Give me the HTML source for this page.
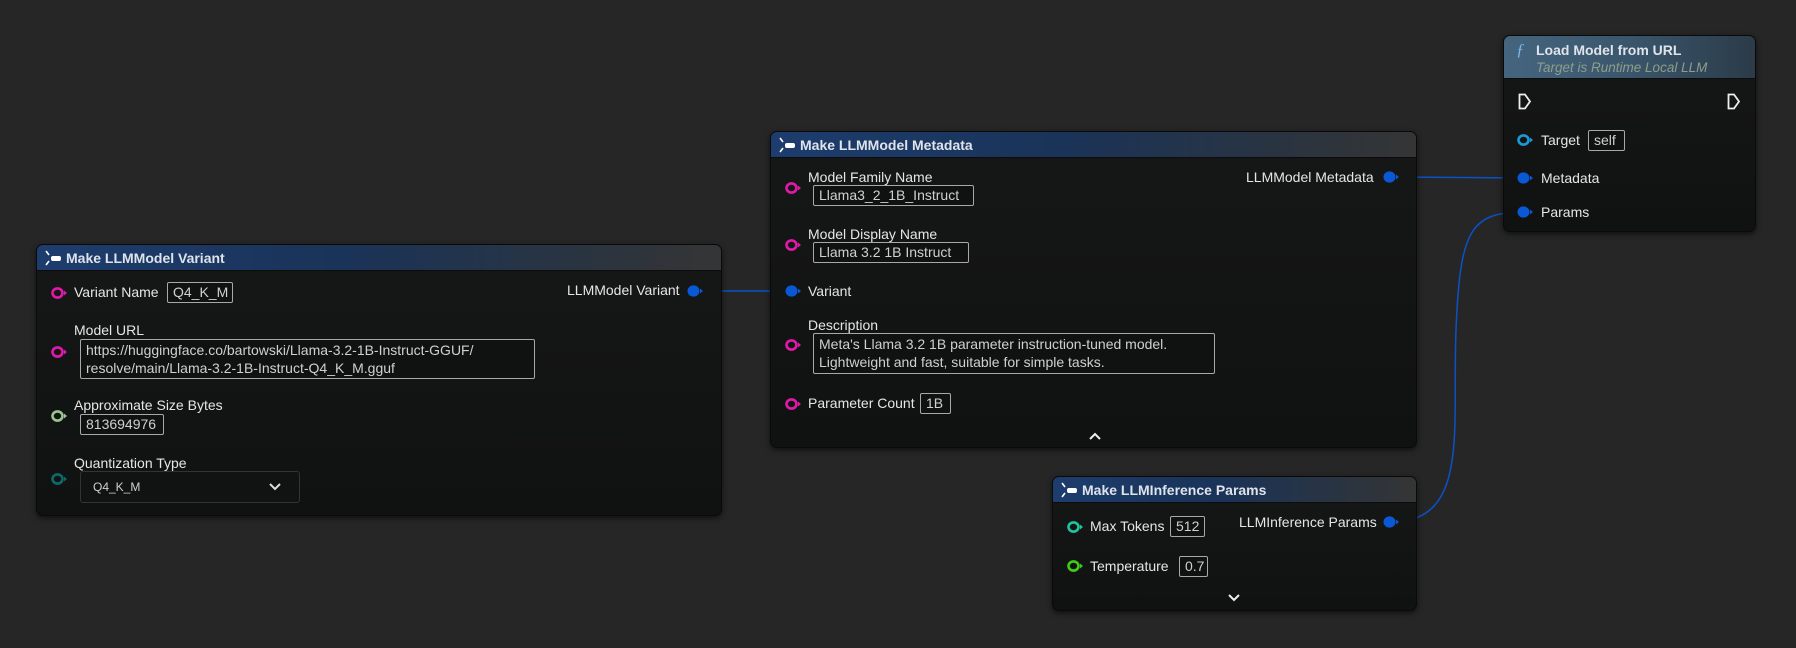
<!DOCTYPE html>
<html><head><meta charset="utf-8"><style>
*{margin:0;padding:0;box-sizing:border-box}
body{width:1796px;height:648px;background:#262626;position:relative;overflow:hidden;font-family:"Liberation Sans",sans-serif;color:#e6e6e6;font-size:14px}
.node{position:absolute;background:linear-gradient(#161717,#101111);border:1px solid #0a0a0a;border-radius:7px;box-shadow:0 2px 6px rgba(0,0,0,.6);overflow:hidden}
.hdr{position:absolute;left:0;right:0;top:0;height:26px;background:linear-gradient(90deg,#1d3d6e 0%,#1a3358 45%,#2a3440 80%,#353535 100%);border-bottom:1px solid #0c0c0c}
.hdr .t{position:absolute;left:29px;top:5px;font-weight:bold;font-size:14px;color:#dfe3ea}
.t{position:absolute;white-space:nowrap}
.box{position:absolute;border:1px solid #a8a8a8;border-radius:2px;color:#d0d0d0;padding:1px 5px;font-size:14px;line-height:17px;white-space:nowrap;background:#101111}
svg.pin{position:absolute;width:18px;height:14px;overflow:visible}
</style></head><body>

<svg width="1796" height="648" style="position:absolute;left:0;top:0">
<path d="M696,291 L790,291" stroke="#0b52c6" stroke-width="1.5" fill="none"/>
<path d="M1391,177 L1525,178" stroke="#0b52c6" stroke-width="1.5" fill="none"/>
<path d="M1391,522 C1470,522 1452,430 1456,330 C1460,230 1470,212 1525,212" stroke="#0b52c6" stroke-width="1.5" fill="none"/>
</svg>

<div class="node" style="left:36px;top:244px;width:686px;height:272px">
 <div class="hdr"><svg style="position:absolute;left:7px;top:5px" width="18" height="16"><path d="M2,1 L5,5 M2,15 L5,11" stroke="#fff" stroke-width="1.6"/><rect x="7" y="6" width="10" height="5" rx="2" fill="#fff"/></svg><div class="t">Make LLMModel Variant</div></div>
</div>
<div class="node" style="left:770px;top:131px;width:647px;height:317px">
 <div class="hdr"><svg style="position:absolute;left:7px;top:5px" width="18" height="16"><path d="M2,1 L5,5 M2,15 L5,11" stroke="#fff" stroke-width="1.6"/><rect x="7" y="6" width="10" height="5" rx="2" fill="#fff"/></svg><div class="t">Make LLMModel Metadata</div></div>
</div>
<div class="node" style="left:1052px;top:476px;width:365px;height:135px">
 <div class="hdr"><svg style="position:absolute;left:7px;top:5px" width="18" height="16"><path d="M2,1 L5,5 M2,15 L5,11" stroke="#fff" stroke-width="1.6"/><rect x="7" y="6" width="10" height="5" rx="2" fill="#fff"/></svg><div class="t">Make LLMInference Params</div></div>
</div>
<div class="node" style="left:1503px;top:35px;width:253px;height:197px">
 <div class="hdr" style="height:43px;background:linear-gradient(90deg,#45657f 0%,#3a566c 50%,#2b3b48 100%)">
  <div class="t" style="left:12px;top:4px;font-family:'Liberation Serif',serif;font-style:italic;font-weight:normal;color:#7ab8e8;font-size:17px">ƒ</div>
  <div class="t" style="left:32px;top:6px;font-weight:bold;color:#dfe3ea">Load Model from URL</div>
  <div class="t" style="left:32px;top:24px;font-style:italic;font-weight:normal;color:#8e9e8a;font-size:13.5px">Target is Runtime Local LLM</div>
 </div>
</div>

<svg class="pin" style="left:51px;top:286px"><ellipse cx="6.5" cy="7" rx="5" ry="4.6" fill="none" stroke="#e01aa8" stroke-width="2.6"/><path d="M13,4.5 L16,7 L13,9.5Z" fill="#e01aa8"/></svg>
<div class="t" style="left:74px;top:284px">Variant Name</div>
<div class="box" style="left:167px;top:282px;width:66px">Q4_K_M</div>
<div class="t" style="left:567px;top:282px">LLMModel Variant</div>
<svg class="pin" style="left:687px;top:284px"><ellipse cx="6.5" cy="7" rx="6" ry="5.6" fill="#0b58d6"/><path d="M13,4.5 L16,7 L13,9.5Z" fill="#0b58d6"/></svg>

<div class="t" style="left:74px;top:322px">Model URL</div>
<svg class="pin" style="left:51px;top:345px"><ellipse cx="6.5" cy="7" rx="5" ry="4.6" fill="none" stroke="#e01aa8" stroke-width="2.6"/><path d="M13,4.5 L16,7 L13,9.5Z" fill="#e01aa8"/></svg>
<div class="box" style="left:80px;top:339px;width:455px;height:40px;line-height:18px">https://huggingface.co/bartowski/Llama-3.2-1B-Instruct-GGUF/<br>resolve/main/Llama-3.2-1B-Instruct-Q4_K_M.gguf</div>

<div class="t" style="left:74px;top:397px">Approximate Size Bytes</div>
<svg class="pin" style="left:51px;top:409px"><ellipse cx="6.5" cy="7" rx="5" ry="4.6" fill="none" stroke="#97c48f" stroke-width="2.6"/><path d="M13,4.5 L16,7 L13,9.5Z" fill="#97c48f"/></svg>
<div class="box" style="left:80px;top:414px;width:84px">813694976</div>

<div class="t" style="left:74px;top:455px">Quantization Type</div>
<svg class="pin" style="left:51px;top:472px"><ellipse cx="6.5" cy="7" rx="5" ry="4.6" fill="none" stroke="#0c6a68" stroke-width="2.6"/><path d="M13,4.5 L16,7 L13,9.5Z" fill="#0c6a68"/></svg>
<div style="position:absolute;left:80px;top:471px;width:220px;height:32px;border:1px solid #333;border-radius:3px;background:#111212"></div>
<div class="t" style="left:93px;top:480px;font-size:12px;color:#d0d0d0">Q4_K_M</div>
<svg style="position:absolute;left:269px;top:483px" width="12" height="8"><path d="M1,1 L6,6 L11,1" stroke="#ddd" stroke-width="2" fill="none"/></svg>

<div class="t" style="left:808px;top:169px">Model Family Name</div>
<svg class="pin" style="left:785px;top:181px"><ellipse cx="6.5" cy="7" rx="5" ry="4.6" fill="none" stroke="#e01aa8" stroke-width="2.6"/><path d="M13,4.5 L16,7 L13,9.5Z" fill="#e01aa8"/></svg>
<div class="box" style="left:813px;top:185px;width:161px">Llama3_2_1B_Instruct</div>
<div class="t" style="left:1246px;top:169px">LLMModel Metadata</div>
<svg class="pin" style="left:1383px;top:170px"><ellipse cx="6.5" cy="7" rx="6" ry="5.6" fill="#0b58d6"/><path d="M13,4.5 L16,7 L13,9.5Z" fill="#0b58d6"/></svg>

<div class="t" style="left:808px;top:226px">Model Display Name</div>
<svg class="pin" style="left:785px;top:238px"><ellipse cx="6.5" cy="7" rx="5" ry="4.6" fill="none" stroke="#e01aa8" stroke-width="2.6"/><path d="M13,4.5 L16,7 L13,9.5Z" fill="#e01aa8"/></svg>
<div class="box" style="left:813px;top:242px;width:156px">Llama 3.2 1B Instruct</div>

<svg class="pin" style="left:785px;top:284px"><ellipse cx="6.5" cy="7" rx="6" ry="5.6" fill="#0b58d6"/><path d="M13,4.5 L16,7 L13,9.5Z" fill="#0b58d6"/></svg>
<div class="t" style="left:808px;top:283px">Variant</div>

<div class="t" style="left:808px;top:317px">Description</div>
<svg class="pin" style="left:785px;top:338px"><ellipse cx="6.5" cy="7" rx="5" ry="4.6" fill="none" stroke="#e01aa8" stroke-width="2.6"/><path d="M13,4.5 L16,7 L13,9.5Z" fill="#e01aa8"/></svg>
<div class="box" style="left:813px;top:333px;width:402px;height:41px;line-height:18px">Meta's Llama 3.2 1B parameter instruction-tuned model.<br>Lightweight and fast, suitable for simple tasks.</div>

<svg class="pin" style="left:785px;top:397px"><ellipse cx="6.5" cy="7" rx="5" ry="4.6" fill="none" stroke="#e01aa8" stroke-width="2.6"/><path d="M13,4.5 L16,7 L13,9.5Z" fill="#e01aa8"/></svg>
<div class="t" style="left:808px;top:395px">Parameter Count</div>
<div class="box" style="left:920px;top:393px;width:31px">1B</div>
<svg style="position:absolute;left:1089px;top:432px" width="12" height="8"><path d="M1,7 L6,2 L11,7" stroke="#eee" stroke-width="2" fill="none"/></svg>

<svg class="pin" style="left:1067px;top:520px"><ellipse cx="6.5" cy="7" rx="5" ry="4.6" fill="none" stroke="#1fc49b" stroke-width="2.6"/><path d="M13,4.5 L16,7 L13,9.5Z" fill="#1fc49b"/></svg>
<div class="t" style="left:1090px;top:518px">Max Tokens</div>
<div class="box" style="left:1170px;top:516px;width:35px">512</div>
<div class="t" style="left:1239px;top:514px">LLMInference Params</div>
<svg class="pin" style="left:1383px;top:515px"><ellipse cx="6.5" cy="7" rx="6" ry="5.6" fill="#0b58d6"/><path d="M13,4.5 L16,7 L13,9.5Z" fill="#0b58d6"/></svg>
<svg class="pin" style="left:1067px;top:559px"><ellipse cx="6.5" cy="7" rx="5" ry="4.6" fill="none" stroke="#3fcb18" stroke-width="2.6"/><path d="M13,4.5 L16,7 L13,9.5Z" fill="#3fcb18"/></svg>
<div class="t" style="left:1090px;top:558px">Temperature</div>
<div class="box" style="left:1179px;top:556px;width:29px">0.7</div>
<svg style="position:absolute;left:1228px;top:594px" width="12" height="8"><path d="M1,1 L6,6 L11,1" stroke="#eee" stroke-width="2" fill="none"/></svg>

<svg style="position:absolute;left:1518px;top:93px" width="14" height="17"><path d="M1.5,1.5 L7,1.5 L12,8.5 L7,15.5 L1.5,15.5Z" stroke="#eee" stroke-width="1.8" fill="none"/></svg>
<svg style="position:absolute;left:1727px;top:93px" width="14" height="17"><path d="M1.5,1.5 L7,1.5 L12,8.5 L7,15.5 L1.5,15.5Z" stroke="#eee" stroke-width="1.8" fill="none"/></svg>
<svg class="pin" style="left:1517px;top:133px"><ellipse cx="6.5" cy="7" rx="5" ry="4.6" fill="none" stroke="#1a9ad6" stroke-width="2.6"/><path d="M13,4.5 L16,7 L13,9.5Z" fill="#1a9ad6"/></svg>
<div class="t" style="left:1541px;top:132px">Target</div>
<div class="box" style="left:1588px;top:130px;width:37px">self</div>
<svg class="pin" style="left:1517px;top:171px"><ellipse cx="6.5" cy="7" rx="6" ry="5.6" fill="#0b58d6"/><path d="M13,4.5 L16,7 L13,9.5Z" fill="#0b58d6"/></svg>
<div class="t" style="left:1541px;top:170px">Metadata</div>
<svg class="pin" style="left:1517px;top:205px"><ellipse cx="6.5" cy="7" rx="6" ry="5.6" fill="#0b58d6"/><path d="M13,4.5 L16,7 L13,9.5Z" fill="#0b58d6"/></svg>
<div class="t" style="left:1541px;top:204px">Params</div>

</body></html>
